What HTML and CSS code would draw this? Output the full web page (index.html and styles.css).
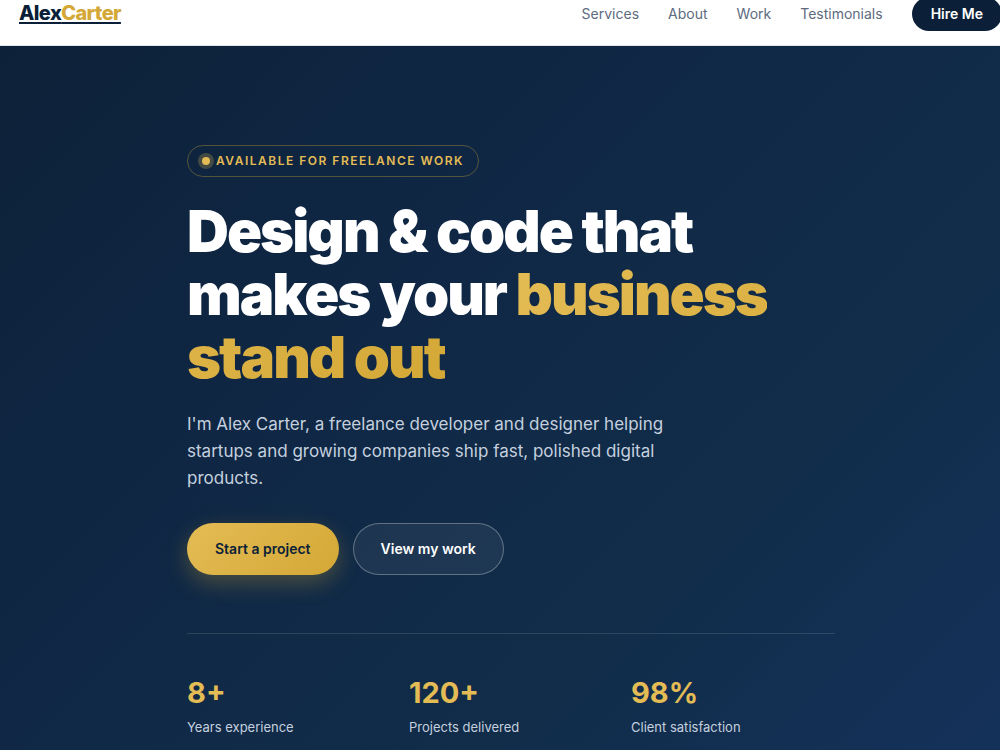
FILE: index.html
```
<!DOCTYPE html>
<html lang="en">
<head>
    <meta charset="UTF-8">
    <meta name="viewport" content="width=device-width, initial-scale=1.0">
    <title>Alex Carter - Freelance Developer &amp; Designer</title>
    <link rel="stylesheet" href="styles.css">
</head>
<body>
    <header class="site-header">
        <a href="#" class="logo">Alex<span>Carter</span></a>
        <nav class="nav-links">
            <a href="#services">Services</a>
            <a href="#about">About</a>
            <a href="#work">Work</a>
            <a href="#testimonials">Testimonials</a>
            <a href="#contact" class="nav-cta">Hire Me</a>
        </nav>
    </header>

    <main class="hero">
        <div class="hero-content">
            <p class="badge"><span class="badge-dot"></span>Available for freelance work</p>
            <h1>Design &amp; code that makes your <span class="highlight">business stand out</span></h1>
            <p class="hero-text">I'm Alex Carter, a freelance developer and designer helping startups and growing companies ship fast, polished digital products.</p>

            <div class="hero-actions">
                <a href="#contact" class="btn btn-primary">Start a project</a>
                <a href="#work" class="btn btn-outline">View my work</a>
            </div>

            <div class="stats">
                <div class="stat">
                    <strong>8+</strong>
                    <span>Years experience</span>
                </div>
                <div class="stat">
                    <strong>120+</strong>
                    <span>Projects delivered</span>
                </div>
                <div class="stat">
                    <strong>98%</strong>
                    <span>Client satisfaction</span>
                </div>
            </div>
        </div>
    </main>
</body>
</html>
```
FILE: styles.css
```
* {
    box-sizing: border-box;
    margin: 0;
    padding: 0;
}
body {
    font-family: Inter, "Liberation Sans", sans-serif;
    min-height: 100vh;
    display: flex;
    flex-direction: column;
    overflow-x: hidden;
    background-color: #0a1f38;
    color: #0b1f38;
}
a {
    text-decoration: none;
}

/* Header */
.site-header {
    display: flex;
    justify-content: space-between;
    align-items: flex-start;
    height: 46px;
    padding: 0 0 0 19px;
    background-color: #fff;
    border-bottom: 1px solid #e2e6ec;
}
.logo {
    margin-top: 1px;
    font-size: 20px;
    line-height: 24px;
    font-weight: 800;
    letter-spacing: -0.03em;
    color: #0b1f38;
    text-decoration: underline;
    text-decoration-thickness: 2px;
    text-underline-offset: 2px;
}
.logo span {
    color: #d4a836;
}
.nav-links {
    display: flex;
    align-items: center;
    gap: 29px;
    margin-top: -3px;
    margin-right: -2px;
}
.nav-links a {
    font-size: 14px;
    line-height: 34px;
    color: #5d6b80;
}
.nav-links .nav-cta {
    padding: 0 19px;
    border-radius: 17px;
    background-color: #0b1f38;
    color: #fff;
    font-weight: 600;
}

/* Hero */
.hero {
    flex: 1;
    padding: 99px 24px 15px 187px;
    background: linear-gradient(135deg, #0d2238 0%, #0f2643 30%, #112d4a 70%, #14315a 100%);
}
.hero-content {
    max-width: 648px;
}
.badge {
    display: inline-flex;
    align-items: center;
    gap: 6px;
    padding: 0 14px;
    border: 1px solid rgba(212, 168, 54, 0.35);
    border-radius: 17px;
    color: #e4bc55;
    font-size: 12px;
    font-weight: 600;
    line-height: 30px;
    letter-spacing: 0.125em;
    text-transform: uppercase;
}
.badge-dot {
    width: 8px;
    height: 8px;
    border-radius: 50%;
    background-color: #e4bc55;
    box-shadow: 0 0 0 4px rgba(228, 188, 85, 0.25);
}
h1 {
    margin-top: 23px;
    color: #fff;
    font-size: 58px;
    font-weight: 900;
    line-height: 63px;
    letter-spacing: -2px;
}
.highlight {
    background: linear-gradient(135deg, #e4bc55, #d4a836);
    background-clip: text;
    -webkit-background-clip: text;
    color: transparent;
}
.hero-text {
    max-width: 504px;
    margin-top: 22px;
    color: #c5d0df;
    font-size: 17px;
    line-height: 27px;
}
.hero-actions {
    display: flex;
    gap: 14px;
    margin-top: 31px;
}
.btn {
    padding: 0 27px;
    border: 1px solid transparent;
    border-radius: 27px;
    font-size: 14px;
    font-weight: 600;
    line-height: 50px;
}
.btn-primary {
    background: linear-gradient(135deg, #e4bc55, #d4a836) border-box;
    color: #0b1f38;
    box-shadow: 0 8px 22px rgba(212, 168, 54, 0.3);
}
.btn-outline {
    background-color: rgba(255, 255, 255, 0.06);
    border-color: rgba(255, 255, 255, 0.3);
    color: #fff;
}

/* Stats */
.stats {
    display: grid;
    grid-template-columns: repeat(3, 1fr);
    gap: 18px;
    margin-top: 58px;
    padding-top: 41px;
    border-top: 1px solid rgba(255, 255, 255, 0.12);
}
.stat strong {
    display: block;
    color: #e4bc55;
    font-size: 29px;
    font-weight: 700;
    line-height: 36px;
}
.stat span {
    display: block;
    margin-top: 6px;
    color: #c5d0df;
    font-size: 13px;
    line-height: 20px;
}
```
